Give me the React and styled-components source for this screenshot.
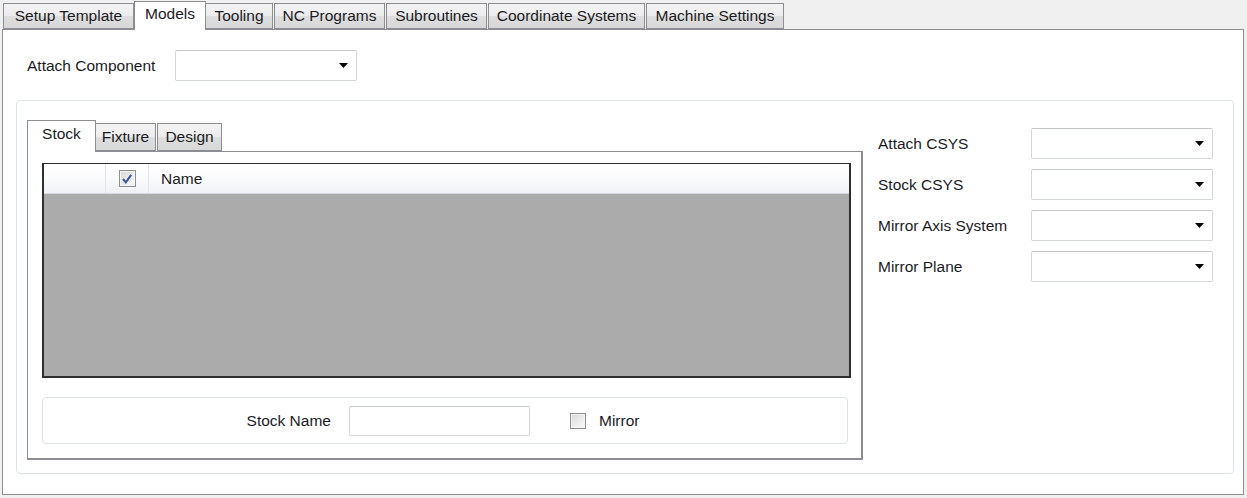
import React from "react";
import styled, { createGlobalStyle } from "styled-components";

const Global = createGlobalStyle`
  * { box-sizing: border-box; }
  body {
    margin: 0;
    background: #f0f0f0;
    font-family: "Liberation Sans", Arial, sans-serif;
    font-size: 15.5px;
    color: #1b1b1f;
  }
`;

const Window = styled.div`
  width: 1247px;
  height: 498px;
  display: flex;
  flex-direction: column;
`;

const TabStrip = styled.div`
  display: flex;
  align-items: flex-end;
  height: ${(p) => p.$h}px;
  padding-left: ${(p) => p.$indent}px;
  position: relative;
  z-index: 1;
`;

const Tab = styled.div`
  width: ${(p) => p.$w}px;
  height: ${(p) => (p.$active ? p.$h + p.$lift : p.$h)}px;
  padding-bottom: ${(p) => (p.$active ? 5 : 1)}px;
  margin: 0 ${(p) => (p.$active ? -1 : 1)}px ${(p) => (p.$active ? -1 : 0)}px
    ${(p) => (p.$active ? -1 : 0)}px;
  display: flex;
  align-items: center;
  justify-content: center;
  border: 1px solid #8c8e94;
  border-bottom: ${(p) => (p.$active ? "none" : "1px solid #8c8e94")};
  background: ${(p) =>
    p.$active ? "#ffffff" : "linear-gradient(#f3f3f3, #ececec 50%, #dedede 51%, #d8d8d8)"};
  white-space: nowrap;
  position: relative;
  z-index: ${(p) => (p.$active ? 2 : 1)};
`;

const Panel = styled.div`
  margin: 0 3px 3px 2px;
  height: 466px;
  border: 1px solid #8c8e94;
  background: #fff;
  padding: 20px 0 0 24px;
`;

const FieldRow = styled.div`
  display: flex;
  align-items: center;
  height: 31px;
`;

const Label = styled.span`
  white-space: nowrap;
  width: ${(p) => (p.$w ? `${p.$w}px` : "auto")};
`;

const Combo = styled.div`
  width: ${(p) => p.$w}px;
  height: 31px;
  border: 1px solid #d3d6dc;
  border-top-color: #c2c5cb;
  border-radius: 2px;
  background: #fff;
  display: flex;
  align-items: center;
  justify-content: flex-end;
  padding-right: 8px;
`;

const Arrow = () => (
  <svg width="9" height="5" viewBox="0 0 9 5">
    <path d="M0 0 H9 L4.5 5 Z" fill="#000" />
  </svg>
);

const GroupBox = styled.div`
  margin: 19px 0 0 -11px;
  width: 1218px;
  height: 374px;
  border: 1px solid #dde2e8;
  border-radius: 4px;
  display: flex;
  padding: 17px 0 0 10px;
`;

const TabControl = styled.div`
  width: 836px;
  display: flex;
  flex-direction: column;
`;

const PagePanel = styled.div`
  height: 309px;
  border: 1px solid #8c8e94;
  border-right-width: 2px;
  border-bottom-width: 2px;
  padding: 11px 0 0 14px;
`;

const Grid = styled.div`
  width: 809px;
  height: 215px;
  border: 2px solid #2f2f2f;
  border-top-width: 1px;
  background: #ababab;
`;

const GridHeader = styled.div`
  height: 30px;
  display: flex;
  background: linear-gradient(#ffffff, #fafbfc 50%, #f1f2f5);
  border-bottom: 1px solid #d7d8dc;
`;

const HeadCell = styled.div`
  width: ${(p) => (p.$w ? `${p.$w}px` : "auto")};
  flex: ${(p) => (p.$w ? "none" : 1)};
  display: flex;
  align-items: center;
  justify-content: ${(p) => (p.$center ? "center" : "flex-start")};
  padding-left: ${(p) => p.$pad || 0}px;
  border-right: 1px solid #e3e4e8;
  &:last-child { border-right: none; }
`;

const Box = styled.div`
  width: ${(p) => p.$s}px;
  height: ${(p) => p.$s}px;
  border: 1px solid #8e8f8f;
  background: linear-gradient(135deg, #d8d8d8, #fbfbfb);
  box-shadow: inset 0 0 0 1px #f4f4f4;
  display: flex;
  align-items: center;
  justify-content: center;
`;

const Check = () => (
  <svg width="12" height="12" viewBox="0 0 12 12">
    <path d="M2 6 L4.8 9.4 L10.2 1.8" fill="none" stroke="#3b58a8" strokeWidth="2" />
  </svg>
);

const NameGroup = styled.div`
  margin-top: 19px;
  width: 806px;
  height: 47px;
  border: 1px solid #dde2e8;
  border-radius: 4px;
  display: flex;
  align-items: center;
  justify-content: center;
  padding-right: 4px;
`;

const TextBox = styled.div`
  width: 181px;
  height: 30px;
  border: 1px solid #d3d6dc;
  border-top-color: #c2c5cb;
  border-radius: 2px;
  margin: 0 40px 0 18px;
`;

const CheckLabel = styled.label`
  display: flex;
  align-items: center;
  gap: 13px;
`;

const SideForm = styled.div`
  margin: 10px 0 0 15px;
  display: grid;
  grid-template-columns: 153px 182px;
  grid-auto-rows: 31px;
  row-gap: 10px;
  align-items: center;
  align-content: start;
`;

const outerTabs = [
  { t: "Setup Template", w: 131 },
  { t: "Models", w: 72, active: true },
  { t: "Tooling", w: 68 },
  { t: "NC Programs", w: 111 },
  { t: "Subroutines", w: 101 },
  { t: "Coordinate Systems", w: 157 },
  { t: "Machine Settings", w: 138 },
];

const innerTabs = [
  { t: "Stock", w: 69, active: true },
  { t: "Fixture", w: 61 },
  { t: "Design", w: 65 },
];

const sideFields = ["Attach CSYS", "Stock CSYS", "Mirror Axis System", "Mirror Plane"];

export default function App() {
  return (
    <Window>
      <Global />
      <TabStrip $h={29} $indent={3}>
        {outerTabs.map((x) => (
          <Tab key={x.t} $h={26} $lift={3} $w={x.w} $active={x.active}>
            {x.t}
          </Tab>
        ))}
      </TabStrip>
      <Panel>
        <FieldRow>
          <Label $w={148}>Attach Component</Label>
          <Combo $w={182}>
            <Arrow />
          </Combo>
        </FieldRow>
        <GroupBox>
          <TabControl>
            <TabStrip $h={33} $indent={1}>
              {innerTabs.map((x) => (
                <Tab key={x.t} $h={28} $lift={4} $w={x.w} $active={x.active}>
                  {x.t}
                </Tab>
              ))}
            </TabStrip>
            <PagePanel>
              <Grid>
                <GridHeader>
                  <HeadCell $w={62} />
                  <HeadCell $w={43} $center>
                    <Box $s={17}>
                      <Check />
                    </Box>
                  </HeadCell>
                  <HeadCell $pad={12}>Name</HeadCell>
                </GridHeader>
              </Grid>
              <NameGroup>
                <Label>Stock Name</Label>
                <TextBox />
                <CheckLabel>
                  <Box $s={16} />
                  Mirror
                </CheckLabel>
              </NameGroup>
            </PagePanel>
          </TabControl>
          <SideForm>
            {sideFields.map((f) => (
              <React.Fragment key={f}>
                <Label>{f}</Label>
                <Combo $w={182}>
                  <Arrow />
                </Combo>
              </React.Fragment>
            ))}
          </SideForm>
        </GroupBox>
      </Panel>
    </Window>
  );
}
